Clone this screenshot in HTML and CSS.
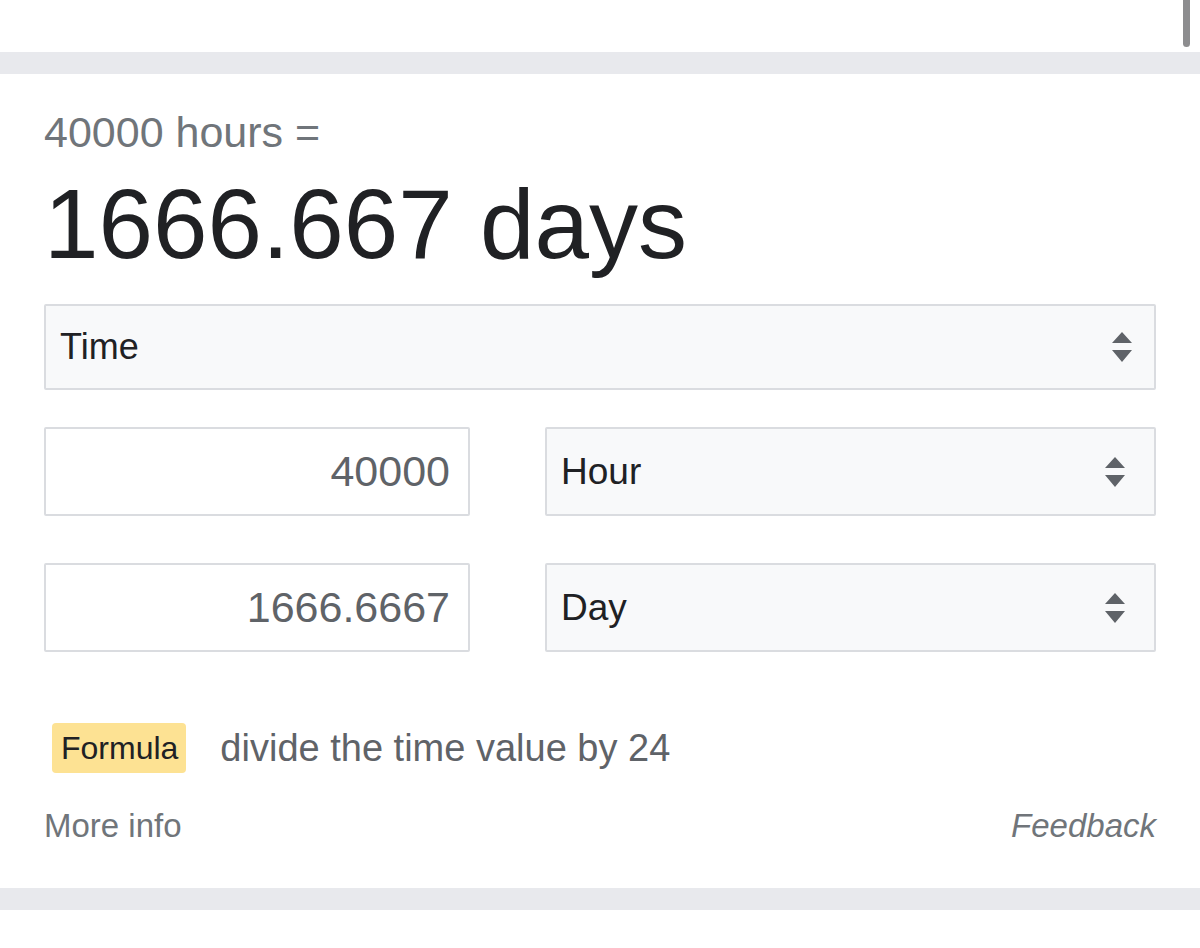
FILE: index.html
```html
<!DOCTYPE html>
<html lang="en">
<head>
<meta charset="utf-8">
<title>Time converter</title>
<link rel="stylesheet" href="styles.css">
</head>
<body>
<div class="top">
  <div class="scrollbar"></div>
</div>
<div class="band"></div>
<div class="card">
  <div class="question">40000 hours =</div>
  <div class="answer">1666.667 days</div>
  <div class="select select-wide">
    <span class="select-label">Time</span>
    <svg class="arrows" width="20" height="30" viewBox="0 0 20 30"><path d="M10 0 L20 11 L0 11 Z M0 18 L20 18 L10 30 Z" fill="#5f6368"/></svg>
  </div>
  <div class="row">
    <div class="field">40000</div>
    <div class="select">
      <span class="select-label">Hour</span>
      <svg class="arrows" width="20" height="30" viewBox="0 0 20 30"><path d="M10 0 L20 11 L0 11 Z M0 18 L20 18 L10 30 Z" fill="#5f6368"/></svg>
    </div>
  </div>
  <div class="row row-last">
    <div class="field">1666.6667</div>
    <div class="select">
      <span class="select-label">Day</span>
      <svg class="arrows" width="20" height="30" viewBox="0 0 20 30"><path d="M10 0 L20 11 L0 11 Z M0 18 L20 18 L10 30 Z" fill="#5f6368"/></svg>
    </div>
  </div>
  <div class="formula">
    <span class="badge">Formula</span>
    <span class="formula-text">divide the time value by 24</span>
  </div>
  <div class="footer">
    <span class="more">More info</span>
    <span class="feedback">Feedback</span>
  </div>
</div>
<div class="band"></div>
<div class="bottom"></div>
</body>
</html>
```
FILE: styles.css
```css
html, body {
  margin: 0;
  padding: 0;
  background: #ffffff;
  font-family: "Liberation Sans", Arial, sans-serif;
}
.top {
  height: 52px;
  position: relative;
  background: #ffffff;
}
.scrollbar {
  position: absolute;
  left: 1183px;
  top: 0;
  width: 7px;
  height: 47px;
  background: #8d8d8f;
  border-radius: 0 0 4px 4px;
}
.band {
  height: 22px;
  background: #e8e9ed;
}
.card {
  background: #ffffff;
  padding: 34px 44px 42px 44px;
  display: flex;
  flex-direction: column;
}
.question {
  font-size: 43px;
  line-height: 48px;
  color: #70757a;
}
.answer {
  margin-top: 13px;
  font-size: 98px;
  line-height: 111px;
  color: #202124;
}
.select {
  box-sizing: border-box;
  height: 89px;
  border: 2px solid #dadce0;
  border-radius: 2px;
  background: #f8f9fa;
  display: flex;
  align-items: center;
  justify-content: space-between;
  padding: 0 29px 0 14px;
  font-size: 37px;
  color: #202124;
}
.select-wide {
  margin-top: 24px;
  height: 86px;
  padding-right: 22px;
  font-size: 36px;
}
.arrows {
  display: block;
}
.row {
  display: grid;
  grid-template-columns: 426px 1fr;
  column-gap: 75px;
  margin-top: 37px;
}
.row-last {
  margin-top: 47px;
}
.field {
  box-sizing: border-box;
  height: 89px;
  border: 2px solid #dadce0;
  border-radius: 2px;
  background: #ffffff;
  display: flex;
  align-items: center;
  justify-content: flex-end;
  padding-right: 18px;
  font-size: 43px;
  color: #5f6368;
}
.formula {
  margin-top: 71px;
  margin-left: 8px;
  display: flex;
  align-items: center;
  gap: 34px;
}
.badge {
  background: #fde293;
  border-radius: 4px;
  height: 50px;
  padding: 0 8px 0 9px;
  display: flex;
  align-items: center;
  font-size: 32px;
  color: #202124;
}
.formula-text {
  font-size: 38px;
  color: #5f6368;
}
.footer {
  margin-top: 33px;
  display: flex;
  justify-content: space-between;
  font-size: 33px;
  line-height: 40px;
  color: #70757a;
}
.feedback {
  font-style: italic;
}
.bottom {
  height: 38px;
  background: #ffffff;
}
```
